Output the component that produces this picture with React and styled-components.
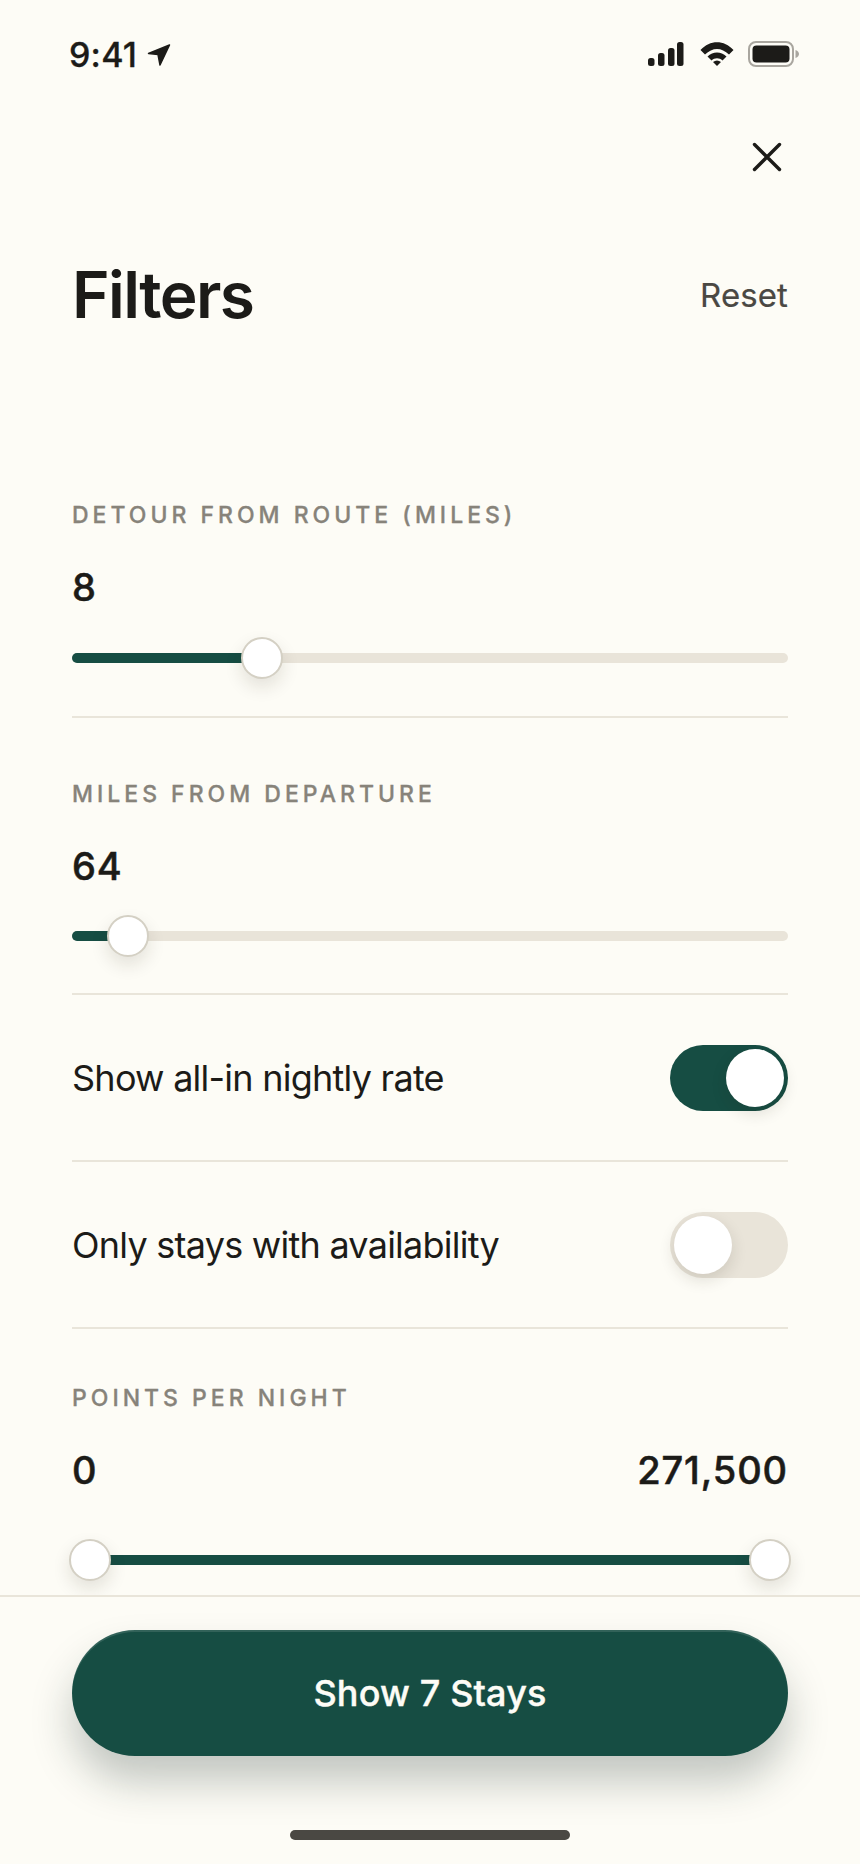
import React from 'react';
import styled, { createGlobalStyle } from 'styled-components';

const GlobalStyle = createGlobalStyle`
  html, body {
    margin: 0;
    background: #fdfcf6;
  }
  * {
    box-sizing: border-box;
  }
`;

const Screen = styled.div`
  width: 860px;
  height: 1864px;
  display: flex;
  flex-direction: column;
  background: #fdfcf6;
  color: #1c1b18;
  font-family: Inter, 'Liberation Sans', sans-serif;
  overflow: hidden;
`;

const StatusBar = styled.div`
  height: 108px;
  flex: none;
  padding: 0 60px 0 69px;
  display: flex;
  align-items: center;
  justify-content: space-between;
`;

const TimeGroup = styled.div`
  display: flex;
  align-items: center;
  gap: 10px;
`;

const Time = styled.span`
  font-size: 34px;
  font-weight: 500;
  letter-spacing: 0.2px;
  -webkit-text-stroke: 0.3px #1c1b18;
`;

const StatusIcons = styled.div`
  display: flex;
  align-items: center;
  gap: 14px;
`;

const CloseRow = styled.div`
  height: 40px;
  flex: none;
  margin-top: 29px;
  padding-right: 77px;
  display: flex;
  justify-content: flex-end;
  align-items: center;
`;

const Header = styled.div`
  flex: none;
  margin-top: 80px;
  padding: 0 72px 106px;
  display: flex;
  align-items: center;
  justify-content: space-between;
`;

const Title = styled.h1`
  margin: 0;
  font-size: 64px;
  line-height: 76px;
  font-weight: 600;
  letter-spacing: -1.6px;
`;

const Reset = styled.span`
  font-size: 33px;
  font-weight: 400;
  letter-spacing: 0.1px;
  -webkit-text-stroke: 0.2px #4a4843;
  color: #4a4843;
`;

const Scroll = styled.div`
  flex: 1;
  min-height: 0;
  overflow: hidden;
  padding: 0 72px;
`;

const Section = styled.section`
  padding-top: ${(p) => p.$top}px;
  padding-bottom: ${(p) => p.$bottom}px;
  border-bottom: ${(p) => (p.$last ? 'none' : '2px solid #e9e5da')};
`;

const Label = styled.div`
  font-size: 23px;
  line-height: 28px;
  font-weight: 500;
  letter-spacing: 4px;
  -webkit-text-stroke: 0.3px #87837a;
  color: #87837a;
`;

const Values = styled.div`
  margin-top: 36px;
  display: flex;
  justify-content: space-between;
  font-size: 38px;
  line-height: 44px;
  font-weight: 500;
  letter-spacing: 0.9px;
  -webkit-text-stroke: 0.5px #1c1b18;
`;

const Slider = styled.div`
  position: relative;
  height: 42px;
  margin-top: ${(p) => p.$gap}px;
  display: flex;
  align-items: center;
`;

const Track = styled.div`
  width: 100%;
  height: 10px;
  border-radius: 5px;
  background: ${(p) => (p.$hidden ? 'transparent' : '#e9e4d9')};
`;

const Fill = styled.div`
  position: absolute;
  top: 16px;
  height: 10px;
  left: ${(p) => p.$from}%;
  width: ${(p) => p.$to - p.$from}%;
  border-radius: 5px;
  background: #164d43;
`;

const Thumb = styled.div`
  position: absolute;
  top: 0;
  left: ${(p) => p.$at}%;
  width: 42px;
  height: 42px;
  margin-left: -21px;
  border-radius: 50%;
  background: #fff;
  border: 2px solid #d4d0c4;
  box-shadow: 0 8px 18px rgba(40, 35, 20, 0.12);
`;

const ToggleRow = styled.div`
  padding: 49.5px 0;
  display: flex;
  align-items: center;
  justify-content: space-between;
  border-bottom: 2px solid #e9e5da;
`;

const ToggleLabel = styled.span`
  font-size: 36px;
  font-weight: 400;
  letter-spacing: -0.75px;
`;

const Toggle = styled.div`
  position: relative;
  width: 118px;
  height: 66px;
  border-radius: 33px;
  background: ${(p) => (p.$on ? '#164d43' : '#e9e4d9')};
`;

const Knob = styled.div`
  position: absolute;
  top: 4px;
  left: ${(p) => (p.$on ? '56px' : '4px')};
  width: 58px;
  height: 58px;
  border-radius: 50%;
  background: #fff;
  box-shadow: 0 6px 16px rgba(40, 35, 20, 0.14);
`;

const Footer = styled.div`
  height: 269px;
  flex: none;
  padding: 33px 72px 0;
  border-top: 2px solid #e9e5da;
  background: #fdfcf6;
  display: flex;
  flex-direction: column;
  align-items: center;
`;

const ShowButton = styled.button`
  width: 100%;
  height: 126px;
  flex: none;
  border: none;
  border-radius: 63px;
  background: #164d43;
  color: #fdfcf6;
  font-family: inherit;
  font-size: 36px;
  font-weight: 500;
  letter-spacing: 0.15px;
  -webkit-text-stroke: 0.4px #fdfcf6;
  box-shadow: inset 0 2px 0 rgba(255, 255, 255, 0.12), 0 26px 40px rgba(25, 45, 40, 0.25);
`;

const HomeBar = styled.div`
  width: 280px;
  height: 10px;
  margin-top: 74px;
  flex: none;
  border-radius: 5px;
  background: #4a4843;
`;

const LocationIcon = () => (
  <svg width="24" height="24" viewBox="0 0 24 24">
    <path d="M22.5 3 L1.5 11.5 L11 12.5 L13 23 Z" fill="#1c1b18" stroke="#1c1b18" strokeWidth="1.5" strokeLinejoin="round" />
  </svg>
);

const SignalIcon = () => (
  <svg width="38" height="24" viewBox="0 0 38 24">
    <rect x="0" y="16" width="6.5" height="8" rx="2.5" fill="#1c1b18" />
    <rect x="10" y="11" width="6.5" height="13" rx="2.5" fill="#1c1b18" />
    <rect x="20" y="6" width="6.5" height="18" rx="2.5" fill="#1c1b18" />
    <rect x="29" y="0" width="6.5" height="24" rx="2.5" fill="#1c1b18" />
  </svg>
);

const WifiIcon = () => (
  <svg width="34" height="24" viewBox="0 0 34 24">
    <path d="M0.5 8 C10 -2.5 24 -2.5 33.5 8 L29 12.5 C21.5 5 12.5 5 5 12.5 Z" fill="#1c1b18" />
    <path d="M7.5 14.5 C13 9 21 9 26.5 14.5 L22.5 18.5 C19.5 15.5 14.5 15.5 11.5 18.5 Z" fill="#1c1b18" />
    <path d="M13 20 C15.5 18 18.5 18 21 20 L17 24 Z" fill="#1c1b18" />
  </svg>
);

const BatteryIcon = () => (
  <svg width="52" height="26" viewBox="0 0 52 26">
    <rect x="1" y="1" width="44" height="24" rx="7" fill="none" stroke="#a9a69f" strokeWidth="2" />
    <rect x="4.5" y="4.5" width="37" height="17" rx="4" fill="#1c1b18" />
    <path d="M47.5 9 C50 10 51 11.5 51 13 C51 14.5 50 16 47.5 17 Z" fill="#a9a69f" />
  </svg>
);

const CloseIcon = () => (
  <svg width="32" height="32" viewBox="0 0 32 32">
    <path d="M3.5 3.5 L28.5 28.5 M28.5 3.5 L3.5 28.5" stroke="#1c1b18" strokeWidth="3.4" strokeLinecap="round" />
  </svg>
);

const App = () => {
  return (
    <>
      <GlobalStyle />
      <Screen>
        <StatusBar>
          <TimeGroup>
            <Time>9:41</Time>
            <LocationIcon />
          </TimeGroup>
          <StatusIcons>
            <SignalIcon />
            <WifiIcon />
            <BatteryIcon />
          </StatusIcons>
        </StatusBar>
        <CloseRow>
          <CloseIcon />
        </CloseRow>
        <Header>
          <Title>Filters</Title>
          <Reset>Reset</Reset>
        </Header>
        <Scroll>
          <Section $top={62} $bottom={37}>
            <Label>DETOUR FROM ROUTE (MILES)</Label>
            <Values>
              <span>8</span>
            </Values>
            <Slider $gap={28}>
              <Track />
              <Fill $from={0} $to={26.5} />
              <Thumb $at={26.5} />
            </Slider>
          </Section>
          <Section $top={62} $bottom={36}>
            <Label>MILES FROM DEPARTURE</Label>
            <Values>
              <span>64</span>
            </Values>
            <Slider $gap={27}>
              <Track />
              <Fill $from={0} $to={7.85} />
              <Thumb $at={7.85} />
            </Slider>
          </Section>
          <ToggleRow>
            <ToggleLabel>Show all-in nightly rate</ToggleLabel>
            <Toggle $on>
              <Knob $on />
            </Toggle>
          </ToggleRow>
          <ToggleRow>
            <ToggleLabel>Only stays with availability</ToggleLabel>
            <Toggle>
              <Knob />
            </Toggle>
          </ToggleRow>
          <Section $top={55} $bottom={0} $last>
            <Label>POINTS PER NIGHT</Label>
            <Values>
              <span>0</span>
              <span>271,500</span>
            </Values>
            <Slider $gap={47}>
              <Track $hidden />
              <Fill $from={2.5} $to={97.5} />
              <Thumb $at={2.5} />
              <Thumb $at={97.5} />
            </Slider>
          </Section>
        </Scroll>
        <Footer>
          <ShowButton>Show 7 Stays</ShowButton>
          <HomeBar />
        </Footer>
      </Screen>
    </>
  );
};

export default App;
